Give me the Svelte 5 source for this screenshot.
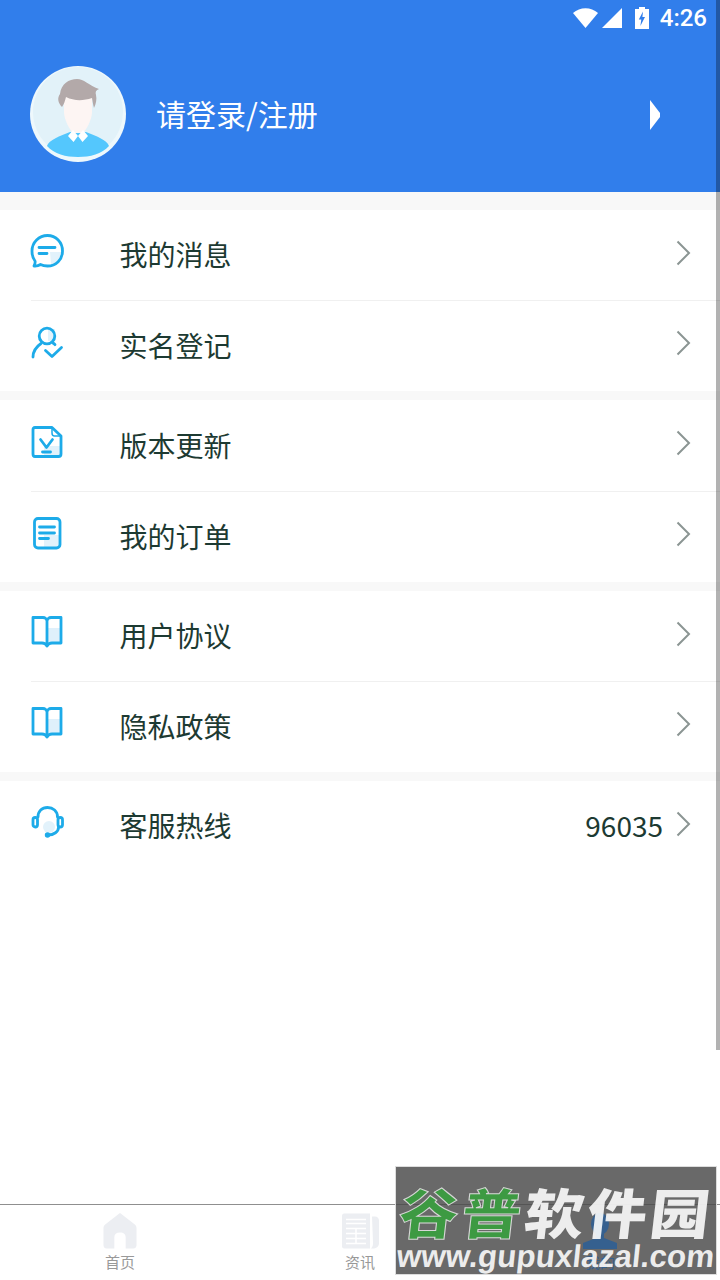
<script lang="ts">
  type Row = { label: string; icon: string; value?: string };

  const groups: Row[][] = [
    [
      { label: '我的消息', icon: 'message' },
      { label: '实名登记', icon: 'person' }
    ],
    [
      { label: '版本更新', icon: 'update' },
      { label: '我的订单', icon: 'order' }
    ],
    [
      { label: '用户协议', icon: 'book' },
      { label: '隐私政策', icon: 'book' }
    ],
    [{ label: '客服热线', icon: 'phone', value: '96035' }]
  ];
</script>

<div class="page">
  <header class="header">
    <div class="status">
      <svg width="25" height="20" viewBox="0 0 25 20">
        <path d="M0 5 C7 -1.500 18 -1.500 25 5 L12.500 20 Z" fill="#fff" />
      </svg>
      <svg class="signal" width="20" height="20" viewBox="0 0 20 20"><path d="M20 0 V20 H0 Z" fill="#fff" /></svg>
      <svg class="battery" width="14" height="22" viewBox="0 0 14 22">
        <path d="M4 0 H10 V2 H14 V22 H0 V2 H4 Z" fill="#fff" />
        <path d="M8 4.500 L3.800 12.500 H6.300 L5.400 19 L10 10 H7.400 Z" fill="#317eeb" />
      </svg>
      <span class="clock">4:26</span>
    </div>
    <div class="login">
      <svg class="avatar" width="96" height="96" viewBox="0 0 96 96">
        <circle cx="48" cy="48" r="48" fill="#eef8fc" />
        <circle cx="48" cy="46" r="45" fill="#e2f2f9" />
        <path d="M17 80 C19 74 30 70 40 66 H56 C66 70 77 74 79 80 C72 88 60 91 48 91 C36 91 24 88 17 80 Z" fill="#54c7fd" />
        <path d="M34 30 V46 C34 54 40 64 43 67 H53 C56 64 62 54 62 46 V30 Z" fill="#fdf5f3" />
        <path d="M38 70 L43 64 L48 70 L43.500 76 Z M58 70 L53 64 L48 70 L52.500 76 Z" fill="#fff" />
        <path d="M32 41 C28 37 27 32 30 28 C31 18 39 13 47 13 C54 13 58 19 69 23 C66 24 65 26 66 29 C67 33 66 38 64 42 C63 38 62.500 35 62 32 C53 35 44 35 36 31 C35 35 34 38 32 41 Z" fill="#b3a9a9" />
      </svg>
      <span class="login-text">请登录/注册</span>
      <svg class="login-arrow" width="12" height="30" viewBox="0 0 12 30"><path d="M1 0 L11 13 V17 L1 30 Z" fill="#fff" /></svg>
    </div>
  </header>

  <main class="list">
    {#each groups as group}
      <section class="group">
        {#each group as row}
          <div class="row">
            <svg class="icon" width="36" height="36" viewBox="0 0 36 36" fill="none" stroke="#1dabe9" stroke-width="2.800" stroke-linecap="round" stroke-linejoin="round">
              {#if row.icon === 'message'}
                <path d="M20 19 H31 C31 25 27 30 21 31 Z" fill="#e2f2fb" stroke="none" />
                <path d="M4 33 C5 31 5.500 29.500 5 28 C3 25.500 2 22 2 18 C2 9.500 9 2.500 17.500 2.500 C26 2.500 32.500 9.500 32.500 18 C32.500 26.500 26 33 17.500 33 C15 33 12.500 32.500 10.500 31.500 C8.500 32.800 6.500 33.200 4 33 Z" />
                <path d="M9 14.500 H25 M9 20.500 H17" />
              {:else if row.icon === 'person'}
                <path d="M18 5 H25 V17 H18 Z" fill="#e2f2fb" stroke="none" />
                <circle cx="17" cy="12" r="7.800" />
                <path d="M3 33 C3 27 6 23 11 19.500 M23 19 C24 19.700 24.600 20.200 25 20.700" />
                <path d="M15.500 26.500 L22 32.500 L31.500 23.500" />
              {:else if row.icon === 'update'}
                <path d="M14 22 H30 V32 H14 Z" fill="#e2f2fb" stroke="none" />
                <path d="M5 3.500 H22 L31 12 V30 C31 31.500 30 32.500 28.500 32.500 H5 C3.500 32.500 3 31.500 3 30 V5.500 C3 4.500 3.500 3.500 5 3.500 Z" />
                <path d="M22 3.500 V9 C22 10.500 23 12 24.500 12 H31" stroke-width="1.500" />
                <path d="M10.500 15.500 L16.500 23.500 L22.500 15.500" />
                <path d="M12.500 28 H20.500" />
              {:else if row.icon === 'order'}
                <path d="M14 20 H29 V32 H14 Z" fill="#e2f2fb" stroke="none" />
                <rect x="4.500" y="3.500" width="25.500" height="29.500" rx="3.500" />
                <path d="M9.500 12 H24.500 M9.500 18 H24.500 M9.500 23.500 H18.500" />
              {:else if row.icon === 'book'}
                <path d="M18 14 H30 V29 H18 Z" fill="#dff0fb" stroke="none" />
                <path d="M17 7 V31 M17 7 C17 5 15 3.500 13 3.500 H3 V29 H12 C14 29 16 30 17 32 C18 30 20 29 22 29 H31 V3.500 H21 C19 3.500 17 5 17 7 Z" />
              {:else}
                <circle cx="19" cy="23" r="6" fill="#e2f2fb" stroke="none" />
                <path d="M8 13 C8 7 12 3.500 17.500 3.500 C23 3.500 27.500 7 27.500 13" />
                <rect x="3" y="13.500" width="4.500" height="9.500" rx="2.200" />
                <rect x="28" y="13.500" width="4.500" height="9.500" rx="2.200" />
                <path d="M28.500 23.500 C28.500 27.500 24 31 18 31" />
                <circle cx="17.500" cy="31" r="1.300" fill="#1dabe9" />
              {/if}
            </svg>
            <span class="label">{row.label}</span>
            {#if row.value}<span class="value">{row.value}</span>{/if}
            <svg class="chevron" width="15" height="26" viewBox="0 0 15 26" fill="none" stroke="#8b9593" stroke-width="2"><path d="M1.500 1.500 L13 13 L1.500 24.500" /></svg>
          </div>
        {/each}
      </section>
    {/each}
  </main>

  <nav class="tabs">
    <div class="tab">
      <svg width="34" height="36" viewBox="0 0 36 37" preserveAspectRatio="none"><path d="M18 0 L34 12 C35 13 35.500 14 35.500 16 V33 C35.500 35 34.500 36.500 32 36.500 H24 V25 C24 22 22 20 18 20 C14 20 12 22 12 25 V36.500 H4 C1.500 36.500 .5 35 .5 33 V16 C.5 14 1 13 2 12 Z" fill="#eceef2" /></svg>
      <span>首页</span>
    </div>
    <div class="tab">
      <svg width="37" height="36" viewBox="0 0 37 35">
        <path d="M2 0 H28 V35 H2 C1 35 0 34 0 33 V2 C0 1 1 0 2 0 Z" fill="#eceef2" />
        <path d="M4 6 H24 M4 10 H24 M4 15 H24 M4 20 H24 M4 25 H24 M4 30 H24 M14 15 V30" stroke="#fff" stroke-width="1.500" />
        <path d="M30 3 H33 C35.500 3 37 5 37 7 V30 C37 33 34 35 31 35 H29 C31 33 31 31 31 29 Z" fill="#eceef2" />
      </svg>
      <span>资讯</span>
    </div>
    <div class="tab active">
      <svg width="36" height="36" viewBox="0 0 36 36">
        <ellipse cx="18" cy="11" rx="9" ry="11" fill="#35608f" />
        <path d="M14 19 H22 V25 L35 30 V36 H1 V30 L14 25 Z" fill="#35608f" />
      </svg>
      <span>我的</span>
    </div>
  </nav>

  <div class="scrollbar"></div>

  <div class="watermark">
    <div class="wm-title"><span class="wm-green">谷普</span><span>软件园</span></div>
    <div class="wm-url">www.gupuxlazal.com</div>
  </div>
</div>

<style>
  :global(body) {
    margin: 0;
    background: #fff;
  }
  .page {
    position: relative;
    width: 720px;
    height: 1280px;
    display: flex;
    flex-direction: column;
    overflow: hidden;
    background: #fff;
    font-family: "Noto Sans CJK SC", "Noto Sans", sans-serif;
  }
  .header {
    height: 192px;
    flex: none;
    background: #317eeb;
    color: #fff;
  }
  .status {
    height: 36px;
    display: flex;
    align-items: center;
    justify-content: flex-end;
    padding-right: 13px;
  }
  .signal {
    margin-left: 4px;
  }
  .battery {
    margin-left: 13px;
  }
  .clock {
    margin-left: 11px;
    font-family: Roboto, sans-serif;
    font-size: 24px;
    font-weight: 500;
    line-height: 36px;
  }
  .login {
    height: 96px;
    margin-top: 30px;
    padding-left: 30px;
    display: flex;
    align-items: center;
  }
  .avatar {
    flex: none;
  }
  .login-text {
    margin-left: 30px;
    margin-top: -2px;
    font-size: 30px;
    line-height: 40px;
  }
  .login-arrow {
    margin-left: auto;
    margin-right: 59px;
    margin-top: 2px;
  }
  .list {
    background: #f8f8f8;
    padding-top: 18px;
    display: flex;
    flex-direction: column;
    gap: 9px;
  }
  .group {
    background: #fff;
  }
  .row {
    position: relative;
    box-sizing: border-box;
    height: 90px;
    display: flex;
    align-items: center;
    padding-left: 30px;
    padding-right: 29px;
    color: #1d3a32;
  }
  .row + .row {
    height: 91px;
  }
  .group:nth-child(2) .row:first-child {
    height: 91px;
  }
  .row + .row::before {
    content: "";
    position: absolute;
    left: 31px;
    right: 0;
    top: 0;
    height: 1px;
    background: #f0f0f0;
  }
  .icon {
    flex: none;
    margin-top: -8px;
  }
  .label {
    margin-left: 53.500px;
    margin-top: -2px;
    font-size: 28px;
    line-height: 40px;
  }
  .value {
    margin-left: auto;
    margin-right: 13px;
    margin-top: -2px;
    font-size: 28px;
    line-height: 40px;
  }
  .chevron {
    flex: none;
    margin-left: auto;
    margin-top: -5px;
  }
  .value + .chevron {
    margin-left: 0;
  }
  .tabs {
    position: absolute;
    left: 0;
    right: 0;
    bottom: 0;
    height: 76px;
    box-sizing: border-box;
    display: flex;
    border-top: 1px solid #8f8f8f;
    background: #fff;
  }
  .tab {
    flex: 1;
    display: flex;
    flex-direction: column;
    align-items: center;
    padding-top: 8px;
    color: #999;
    font-size: 15px;
    line-height: 20px;
  }
  .tab svg {
    display: block;
    margin-bottom: 3px;
  }
  /* the active tab shows through the watermark box */
  .tab.active svg,
  .tab.active span {
    position: relative;
    z-index: 2;
  }
  .tab.active {
    color: #35608f;
  }
  .scrollbar {
    position: absolute;
    top: 0;
    right: 0;
    width: 4px;
    height: 1050px;
    background: rgba(0, 0, 0, 0.3);
  }
  .watermark {
    position: absolute;
    left: 395px;
    top: 1166px;
    width: 322px;
    height: 109px;
    box-sizing: border-box;
    border: 1px solid #ddd;
    background: rgba(72, 72, 72, 0.82);
    color: rgba(255, 255, 255, 0.88);
    display: flex;
    flex-direction: column;
    align-items: center;
    overflow: hidden;
  }
  .wm-title {
    position: relative;
    z-index: 3;
    font-size: 54px;
    font-weight: 900;
    line-height: 64px;
    margin-top: 12px;
    letter-spacing: 3px;
    white-space: nowrap;
    transform: scaleX(1.1) skewX(-6deg);
  }
  .wm-green {
    color: #3d9a42;
    -webkit-text-stroke: 1px #d7d7d7;
  }
  .wm-url {
    position: relative;
    z-index: 3;
    margin-top: -4px;
    font-family: "Liberation Sans", sans-serif;
    font-size: 31.500px;
    font-weight: 700;
    line-height: 34px;
    white-space: nowrap;
    transform: skewX(-6deg);
  }
</style>
